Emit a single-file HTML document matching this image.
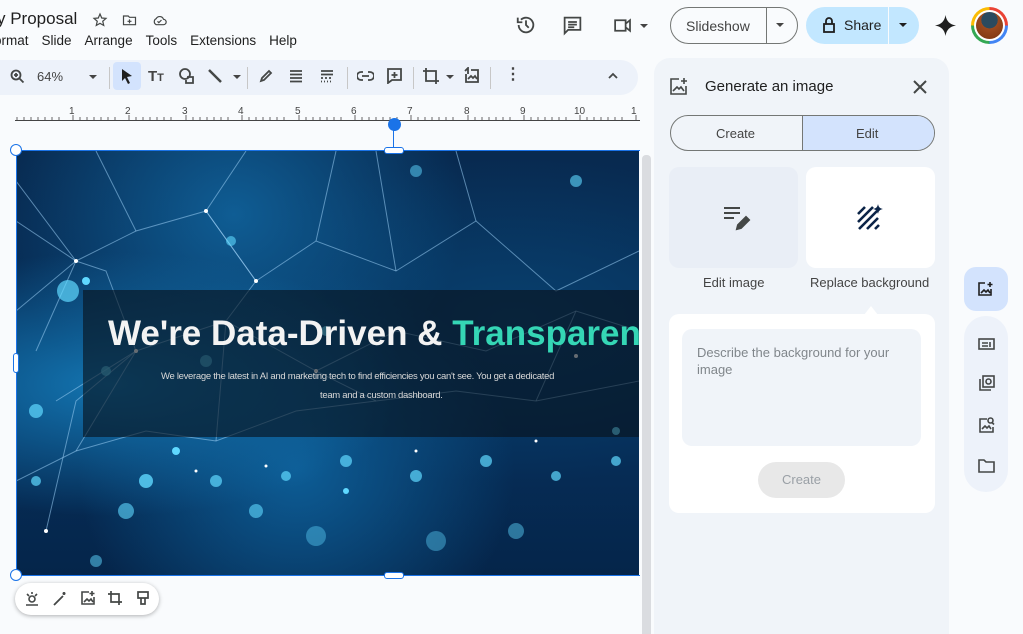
<!DOCTYPE html>
<html><head><meta charset="utf-8"><style>
*{box-sizing:border-box;margin:0;padding:0}
body{width:1023px;height:634px;overflow:hidden;background:#f9fbfd;font-family:"Liberation Sans",Arial,sans-serif;color:#1f1f1f;position:relative}
.a{position:absolute}
.menu span{margin-right:13px}
.ic{position:absolute;fill:none;stroke:#444746;stroke-width:1.8}
</style></head><body>
<div class="a" style="left:-3px;top:9px;font-size:17px;color:#1f1f1f">y Proposal</div>
<svg class="ic" style="left:92px;top:12px" width="16" height="16" viewBox="0 0 24 24"><path d="M12 3l2.6 6 6.4.6-4.9 4.3 1.5 6.3L12 17l-5.6 3.2 1.5-6.3L3 9.6 9.4 9z"/></svg>
<svg class="ic" style="left:121px;top:12px" width="17" height="16" viewBox="0 0 24 24"><path d="M3 6h7l2 2h9v11H3z M12 11v6 M9 14h6"/></svg>
<svg class="ic" style="left:150px;top:12px" width="19" height="16" viewBox="0 0 24 24"><path d="M7 19h11a4 4 0 0 0 0-8 6 6 0 0 0-11-1 5 5 0 0 0 0 9z M9 14l2 2 4-4"/></svg>
<div class="a menu" style="left:-6px;top:33px;font-size:13.5px;color:#1f1f1f"><span>ormat</span><span>Slide</span><span>Arrange</span><span>Tools</span><span>Extensions</span><span>Help</span></div>
<svg class="ic" style="left:515px;top:14px;stroke-width:2" width="22" height="22" viewBox="0 0 24 24"><path d="M4 12a8 8 0 1 0 2.5-5.8 M3 4v5h5 M12 7v5l3 3"/></svg>
<svg class="ic" style="left:562px;top:15px;stroke-width:2" width="21" height="21" viewBox="0 0 24 24"><path d="M3 3h18v14H7l-4 4z M7 8h10 M7 11h10 M7 14h7"/></svg>
<svg class="ic" style="left:611px;top:15px;stroke-width:2" width="24" height="21" viewBox="0 0 24 24"><path d="M3 6h12v12H3z M15 10l5-4v12l-5-4"/></svg>
<div class="a" style="left:640px;top:24px;border:4px solid transparent;border-top-color:#444"></div>
<div class="a" style="left:670px;top:7px;width:128px;height:37px;border:1px solid #747775;border-radius:19px;font-size:14px;color:#444"><span class="a" style="left:15px;top:10px">Slideshow</span><span class="a" style="left:95px;top:0;height:35px;border-left:1px solid #747775"></span><span class="a" style="left:105px;top:15px;border:4px solid transparent;border-top-color:#444"></span></div>
<div class="a" style="left:806px;top:7px;width:113px;height:37px;background:#c2e7ff;border-radius:19px;font-size:14px;color:#1f1f1f"><svg class="ic" style="left:16px;top:10px;stroke:#1f1f1f;stroke-width:1.8" width="14" height="16" viewBox="0 0 14 16"><rect x="2" y="7" width="10" height="8"/><path d="M4 7V4a3 3 0 0 1 6 0v3"/></svg><span class="a" style="left:38px;top:10px">Share</span><span class="a" style="left:82px;top:0;height:37px;border-left:1px solid #f9fbfd"></span><span class="a" style="left:93px;top:16px;border:4px solid transparent;border-top-color:#1f1f1f"></span></div>
<svg class="a" style="left:935px;top:15px" width="21" height="21" viewBox="0 0 24 24"><path d="M12 0C13 7 17 11 24 12 17 13 13 17 12 24 11 17 7 13 0 12 7 11 11 7 12 0z" fill="#1f1f1f"/></svg>
<div class="a" style="left:971px;top:7px;width:37px;height:37px;border-radius:50%;background:conic-gradient(#ea4335 0 25%,#4285f4 0 50%,#34a853 0 75%,#fbbc04 0)"></div>
<div class="a" style="left:974px;top:10px;width:31px;height:31px;border-radius:50%;background:#fff"></div>
<div class="a" style="left:976px;top:12px;width:27px;height:27px;border-radius:50%;background:radial-gradient(circle at 50% 30%,#2b4a5e 0 35%,#9c4a1e 36%,#7a3410)"></div>

<!-- toolbar -->
<div class="a" style="left:-20px;top:60px;width:658px;height:35px;background:#edf2fa;border-radius:18px"></div>
<svg class="ic" style="left:10px;top:69px;stroke-width:1.8" width="15" height="15" viewBox="0 0 15 15"><circle cx="6" cy="6" r="4.5"/><path d="M9.5 9.5l4 4M4 6h4M6 4v4"/></svg>
<div class="a" style="left:37px;top:69px;font-size:13px;color:#444">64%</div>
<div class="a" style="left:89px;top:75px;border:4px solid transparent;border-top-color:#444"></div>
<div class="a" style="left:109px;top:67px;height:22px;border-left:1px solid #c7c7c7"></div>
<div class="a" style="left:113px;top:62px;width:28px;height:28px;background:#d3e3fd;border-radius:4px"></div>
<svg class="a" style="left:120px;top:68px" width="14" height="16" viewBox="0 0 14 16"><path d="M2 1l10 7-5 1 3 6-2 1-3-6-3 3z" fill="#1f1f1f"/></svg>
<div class="a" style="left:148px;top:68px;font-size:15px;color:#444;font-weight:bold">T<span style="font-size:11px">T</span></div>
<svg class="ic" style="left:178px;top:67px" width="18" height="18" viewBox="0 0 18 18"><circle cx="7" cy="7" r="5"/><path d="M9 10h6v6H8v-3"/></svg>
<svg class="ic" style="left:206px;top:67px;stroke-width:2.5" width="18" height="18" viewBox="0 0 18 18"><path d="M3 3l12 12"/></svg>
<div class="a" style="left:233px;top:75px;border:4px solid transparent;border-top-color:#444"></div>
<div class="a" style="left:247px;top:67px;height:22px;border-left:1px solid #c7c7c7"></div>
<svg class="ic" style="left:258px;top:68px" width="16" height="16" viewBox="0 0 16 16"><path d="M3 13l1-3 7-7 2 2-7 7z"/></svg>
<svg class="ic" style="left:288px;top:68px" width="16" height="16" viewBox="0 0 16 16"><path d="M2 3h12M2 6.5h12M2 10h12M2 13.5h12"/></svg>
<svg class="ic" style="left:319px;top:68px" width="16" height="16" viewBox="0 0 16 16"><path d="M2 3h12M2 6.5h12M2 10h2M6 10h2M10 10h2M2 13.5h1M5 13.5h1M8 13.5h1M11 13.5h1"/></svg>
<div class="a" style="left:347px;top:67px;height:22px;border-left:1px solid #c7c7c7"></div>
<svg class="ic" style="left:357px;top:69px" width="17" height="14" viewBox="0 0 17 14"><path d="M6 3H4a4 4 0 0 0 0 8h2M11 3h2a4 4 0 0 1 0 8h-2M5 7h7"/></svg>
<svg class="ic" style="left:386px;top:67px" width="17" height="17" viewBox="0 0 17 17"><path d="M2 2h13v11H6l-4 3z M8.5 5v6M5.5 8h6"/></svg>
<div class="a" style="left:413px;top:67px;height:22px;border-left:1px solid #c7c7c7"></div>
<svg class="ic" style="left:422px;top:67px" width="18" height="18" viewBox="0 0 18 18"><path d="M4 1v13h13M1 4h13v13"/></svg>
<div class="a" style="left:446px;top:75px;border:4px solid transparent;border-top-color:#444"></div>
<svg class="ic" style="left:463px;top:67px" width="17" height="17" viewBox="0 0 17 17"><path d="M3 7V15h12V3H8M2 4l3-3v6M5 12l3-3 2 2 2-2 2 3"/></svg>
<div class="a" style="left:490px;top:67px;height:22px;border-left:1px solid #c7c7c7"></div>
<div class="a" style="left:505px;top:64px;font-size:16px;color:#444;font-weight:bold">⋮</div>
<svg class="ic" style="left:606px;top:71px" width="14" height="10" viewBox="0 0 14 10"><path d="M3 7l4-4 4 4"/></svg>

<!-- ruler -->
<svg class="a" style="left:0;top:100px" width="640" height="22">
<g font-family="Liberation Sans" font-size="10" fill="#444"><text x="69" y="14">1</text><text x="125" y="14">2</text><text x="182" y="14">3</text><text x="238" y="14">4</text><text x="295" y="14">5</text><text x="351" y="14">6</text><text x="407" y="14">7</text><text x="464" y="14">8</text><text x="520" y="14">9</text><text x="574" y="14">10</text><text x="631" y="14">1</text></g>
<path d="M15 20.5H640" stroke="#444" stroke-width="1"/>
<path d="M17 20v-3M24 20v-3M31 20v-3M38 20v-3M45 20v-3M52 20v-3M59 20v-3M73 20v-5M80 20v-3M87 20v-3M94 20v-3M101 20v-3M108 20v-3M115 20v-3M129 20v-5M136 20v-3M143 20v-3M150 20v-3M157 20v-3M164 20v-3M171 20v-3M186 20v-5M193 20v-3M200 20v-3M207 20v-3M214 20v-3M221 20v-3M228 20v-3M242 20v-5M249 20v-3M256 20v-3M263 20v-3M270 20v-3M277 20v-3M284 20v-3M299 20v-5M306 20v-3M313 20v-3M320 20v-3M327 20v-3M334 20v-3M341 20v-3M355 20v-5M362 20v-3M369 20v-3M376 20v-3M383 20v-3M390 20v-3M397 20v-3M411 20v-5M418 20v-3M425 20v-3M432 20v-3M439 20v-3M446 20v-3M453 20v-3M468 20v-5M475 20v-3M482 20v-3M489 20v-3M496 20v-3M503 20v-3M510 20v-3M524 20v-5M531 20v-3M538 20v-3M545 20v-3M552 20v-3M559 20v-3M566 20v-3M580 20v-5M587 20v-3M594 20v-3M601 20v-3M608 20v-3M615 20v-3M622 20v-3M636 20v-5" stroke="#666" stroke-width="1"/>
</svg>

<!-- slide image -->
<div class="a" style="left:16px;top:151px;width:623px;height:424px;overflow:hidden;background:radial-gradient(ellipse at 15% 55%,#1374b0 0,transparent 40%),radial-gradient(ellipse at 45% 75%,#0d5d96 0,transparent 45%),radial-gradient(ellipse at 35% 15%,#0f5d94 0,transparent 40%),radial-gradient(ellipse at 80% 40%,#08406e 0,transparent 45%),linear-gradient(180deg,#082a50,#06305c 60%,#05254a)">
<svg width="623" height="424" style="position:absolute;left:0;top:0">
<g stroke="#9cd0f5" stroke-opacity=".55" stroke-width="1" fill="none">
<path d="M0 70L60 110L120 80L190 60L240 130L300 90L380 120L460 70L540 140L623 100"/>
<path d="M40 250L120 200L210 170L300 220L380 180L470 200L560 160L623 180"/>
<path d="M30 380L60 250L120 200L90 120L60 110L20 200"/>
<path d="M210 170L240 130L190 60L230 0M300 90L320 0M380 120L360 0M460 70L440 0M120 80L80 0"/>
<path d="M0 330L60 300L130 280L200 290L280 260L360 250L440 240L520 250L623 230"/>
<path d="M60 300L120 200M200 290L210 170M360 250L300 220M520 250L560 160M0 30L60 110M0 160L60 110"/>
</g>
<g fill="#5fd8ff">
<circle cx="52" cy="140" r="11" opacity=".7"/><circle cx="310" cy="180" r="5"/><circle cx="70" cy="130" r="4"/><circle cx="130" cy="330" r="7" opacity=".8"/><circle cx="90" cy="220" r="5" opacity=".7"/><circle cx="200" cy="330" r="6" opacity=".7"/><circle cx="270" cy="325" r="5" opacity=".7"/><circle cx="330" cy="310" r="6" opacity=".7"/><circle cx="400" cy="325" r="6" opacity=".7"/><circle cx="470" cy="310" r="6" opacity=".7"/><circle cx="540" cy="325" r="5" opacity=".7"/><circle cx="600" cy="310" r="5" opacity=".7"/><circle cx="110" cy="360" r="8" opacity=".6"/><circle cx="240" cy="360" r="7" opacity=".6"/><circle cx="300" cy="385" r="10" opacity=".4"/><circle cx="420" cy="390" r="10" opacity=".4"/><circle cx="500" cy="380" r="8" opacity=".45"/><circle cx="20" cy="330" r="5" opacity=".7"/><circle cx="560" cy="30" r="6" opacity=".6"/><circle cx="400" cy="20" r="6" opacity=".5"/><circle cx="190" cy="210" r="6" opacity=".6"/><circle cx="80" cy="410" r="6" opacity=".5"/><circle cx="215" cy="90" r="5" opacity=".6"/><circle cx="20" cy="260" r="7" opacity=".7"/><circle cx="160" cy="300" r="4"/><circle cx="330" cy="340" r="3"/><circle cx="600" cy="280" r="4"/>
</g>
<g fill="#fff"><circle cx="60" cy="110" r="2"/><circle cx="240" cy="130" r="2"/><circle cx="190" cy="60" r="2"/><circle cx="300" cy="220" r="2"/><circle cx="560" cy="205" r="2"/><circle cx="30" cy="380" r="2"/><circle cx="120" cy="200" r="2"/><circle cx="180" cy="320" r="1.5"/><circle cx="250" cy="315" r="1.5"/><circle cx="400" cy="300" r="1.5"/><circle cx="520" cy="290" r="1.5"/></g>
</svg>
<div class="a" style="left:67px;top:139px;width:560px;height:147px;background:rgba(8,18,28,.62)"></div>
<div class="a" style="left:92px;top:163px;font-size:35px;font-weight:bold;color:#f3f3f3;white-space:nowrap;letter-spacing:0px">We're Data-Driven &amp; <span style="color:#35d6b5">Transparent</span></div>
<div class="a" style="left:145px;top:220px;font-size:9.5px;color:#d8d8d8;white-space:nowrap;letter-spacing:-.3px">We leverage the latest in AI and marketing tech to find efficiencies you can't see. You get a dedicated</div>
<div class="a" style="left:304px;top:239px;font-size:9.5px;color:#d8d8d8;letter-spacing:-.3px">team and a custom dashboard.</div>
</div>
<div class="a" style="left:16px;top:150px;width:624px;height:426px;border:1.5px solid #1a73e8;border-right:none"></div>
<div class="a" style="left:10px;top:144px;width:12px;height:12px;border-radius:50%;border:1.5px solid #1a73e8;background:#fff"></div>
<div class="a" style="left:10px;top:569px;width:12px;height:12px;border-radius:50%;border:1.5px solid #1a73e8;background:#fff"></div>
<div class="a" style="left:13px;top:353px;width:6px;height:20px;border-radius:3px;border:1.5px solid #1a73e8;background:#fff"></div>
<div class="a" style="left:384px;top:147px;width:20px;height:7px;border-radius:3px;border:1.5px solid #1a73e8;background:#fff"></div>
<div class="a" style="left:384px;top:572px;width:20px;height:7px;border-radius:3px;border:1.5px solid #1a73e8;background:#fff"></div>
<div class="a" style="left:393px;top:125px;height:22px;border-left:1.5px solid #1a73e8"></div>
<div class="a" style="left:388px;top:118px;width:13px;height:13px;border-radius:50%;background:#1a73e8"></div>

<div class="a" style="left:15px;top:583px;width:144px;height:32px;background:#fff;border-radius:16px;box-shadow:0 1px 4px rgba(0,0,0,.3)"></div>
<svg class="ic" style="left:24px;top:591px;stroke-width:1.6" width="16" height="16" viewBox="0 0 16 16"><circle cx="8" cy="8" r="3"/><path d="M2 14h12M3 3l2 2M13 3l-2 2M8 1v2"/></svg>
<svg class="ic" style="left:52px;top:591px;stroke-width:1.8" width="16" height="16" viewBox="0 0 16 16"><path d="M2 14l9-9M12 1v3M10.5 2.5h3"/></svg>
<svg class="ic" style="left:80px;top:590px;stroke-width:1.6" width="16" height="16" viewBox="0 0 16 16"><path d="M9 2H2v12h12V7M4 12l3-3 2 2 2-2 2 3M12 1v5M9.5 3.5h5"/></svg>
<svg class="ic" style="left:107px;top:590px;stroke-width:1.7" width="16" height="16" viewBox="0 0 16 16"><path d="M4 1v11h11M1 4h11v11"/></svg>
<svg class="ic" style="left:135px;top:590px;stroke-width:1.7" width="16" height="16" viewBox="0 0 16 16"><path d="M3 2h10v6H3z M6 8v6h4V8"/></svg>

<!-- scrollbar -->
<div class="a" style="left:642px;top:155px;width:9px;height:479px;background:#dadce0;border-radius:4px 4px 0 0"></div>

<!-- panel -->
<div class="a" style="left:654px;top:58px;width:295px;height:576px;background:#f0f4f9;border-radius:16px 16px 0 0"></div>
<svg class="ic" style="left:669px;top:77px;stroke-width:1.6" width="20" height="19" viewBox="0 0 20 19"><path d="M10 2H2v15h15V9M4 14l4-4 2 2 2-2 3 4M15 1v6M12 4h6"/></svg>
<div class="a" style="left:705px;top:78px;font-size:15px;color:#1f1f1f">Generate an image</div>
<svg class="ic" style="left:912px;top:79px;stroke-width:2" width="16" height="16" viewBox="0 0 16 16"><path d="M2 2l12 12M14 2L2 14"/></svg>
<div class="a" style="left:670px;top:115px;width:265px;height:36px;border:1px solid #747775;border-radius:18px;overflow:hidden;font-size:13px;color:#444">
<div class="a" style="left:131px;top:0;width:133px;height:34px;background:#d3e3fd;border-left:1px solid #747775"></div>
<span class="a" style="left:45px;top:10px">Create</span><span class="a" style="left:185px;top:10px">Edit</span></div>
<div class="a" style="left:669px;top:167px;width:129px;height:101px;background:#e9eef6;border-radius:10px"></div>
<svg class="ic" style="left:723px;top:205px;stroke-width:2" width="30" height="28" viewBox="0 0 30 28"><path d="M1 3h16M1 8h16M1 13h10"/><path d="M14 24l1-4 8-8 3 3-8 8z" fill="#444746"/></svg>
<div class="a" style="left:806px;top:167px;width:129px;height:101px;background:#fff;border-radius:10px"></div>
<svg class="a" style="left:857px;top:204px" width="27" height="27" viewBox="0 0 27 27"><g stroke="#0b2447" stroke-width="2.6"><path d="M1 10L8 3M1 18L16 3M2 25L20 7M10 25L21 14M18 25L22 21"/></g><path d="M21 0C21.5 3 23 4.5 26 5 23 5.5 21.5 7 21 10 20.5 7 19 5.5 16 5 19 4.5 20.5 3 21 0z" fill="#0b2447"/></svg>
<div class="a" style="left:703px;top:275px;font-size:13px;color:#444">Edit image</div>
<div class="a" style="left:810px;top:275px;font-size:13px;color:#444">Replace background</div>
<div class="a" style="left:864px;top:306px;width:0;height:0;border:7px solid transparent;border-bottom:9px solid #fff;border-top:none"></div>
<div class="a" style="left:669px;top:314px;width:266px;height:199px;background:#fff;border-radius:10px"></div>
<div class="a" style="left:682px;top:329px;width:239px;height:117px;background:#f0f4f9;border-radius:10px;padding:15px;font-size:13px;color:#80868b;line-height:17px">Describe the background for your image</div>
<div class="a" style="left:758px;top:462px;width:87px;height:36px;background:#e8e8e8;border-radius:18px;font-size:13px;color:#9aa0a6;text-align:center;line-height:36px">Create</div>

<!-- side rail -->
<div class="a" style="left:964px;top:267px;width:44px;height:44px;background:#d3e3fd;border-radius:12px"></div>
<svg class="ic" style="left:977px;top:281px;stroke-width:1.6;stroke:#1f1f1f" width="17" height="16" viewBox="0 0 17 16"><path d="M8 2H2v12h12V8M4 12l3-3 2 2 2-2 2 3M13 1v5M10.5 3.5h5"/></svg>
<div class="a" style="left:964px;top:316px;width:44px;height:176px;background:#edf2fa;border-radius:22px"></div>
<svg class="ic" style="left:978px;top:337px;stroke-width:1.6" width="17" height="14" viewBox="0 0 17 14"><rect x="1" y="2" width="15" height="10"/><path d="M4 6h6M4 9h6M12 5v5"/></svg>
<svg class="ic" style="left:978px;top:375px;stroke-width:1.6" width="17" height="17" viewBox="0 0 17 17"><rect x="5" y="1" width="11" height="11"/><circle cx="10.5" cy="6.5" r="2.5"/><path d="M2 4v11h11"/></svg>
<svg class="ic" style="left:978px;top:416px;stroke-width:1.6" width="17" height="17" viewBox="0 0 17 17"><path d="M9 3H2v13h13v-5M4 13l3-3 2 2 2-2 2 3"/><circle cx="12.5" cy="4.5" r="2.5"/><path d="M14 6.5l2 2"/></svg>
<svg class="ic" style="left:978px;top:458px;stroke-width:1.6" width="17" height="15" viewBox="0 0 17 15"><path d="M1 2h5l2 2h8v10H1z"/></svg>
</body></html>
